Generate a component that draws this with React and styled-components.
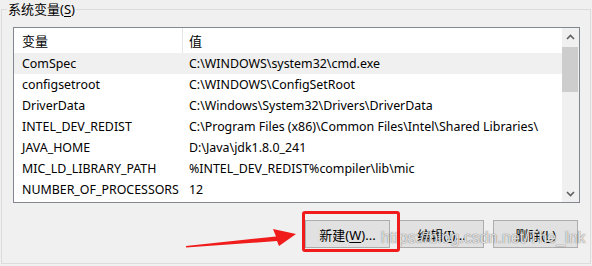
import React from "react";
import styled, { createGlobalStyle } from "styled-components";

const GlobalStyle = createGlobalStyle`
  html, body { margin: 0; padding: 0; background: #f0f0f0; }
  body {
    width: 592px; height: 266px; overflow: hidden;
    font-family: "Noto Sans", "Noto Sans CJK SC", sans-serif;
    font-size: 13px; color: #000;
  }
  * { box-sizing: border-box; }
`;

const Page = styled.div`
  position: relative;
  width: 592px;
  height: 266px;
  padding: 0 1px 0 1px;
`;

const Group = styled.fieldset`
  margin: 0;
  border: 1px solid #dcdcdc;
  padding: 9px 10px 15px 11px;
  min-width: 0;
`;

const Legend = styled.legend`
  margin-left: -6px;
  padding: 0 1px;
  line-height: 18px;
  height: 18px;
  font-size: 13px;
`;

const U = styled.span`
  text-decoration: underline;
  text-underline-offset: 2px;
`;

const ListBox = styled.div`
  display: flex;
  height: 176px;
  border: 1px solid #828790;
  background: #fff;
  font-size: 12.4px;
`;

const ListBody = styled.div`
  flex: 1;
  display: flex;
  flex-direction: column;
  min-width: 0;
`;

const Header = styled.div`
  display: grid;
  grid-template-columns: 169px 1fr;
  height: 25px;
  font-size: 13px;
`;

const HeadCell = styled.div`
  display: flex;
  align-items: center;
  padding-left: ${(p) => (p.$first ? "8px" : "6px")};
  border-right: ${(p) => (p.$first ? "1px solid #e5e5e5" : "none")};
`;

const Row = styled.div`
  display: grid;
  grid-template-columns: 169px 1fr;
  height: 21px;
  align-items: center;
  background: ${(p) => (p.$selected ? "#f0f0f0" : "transparent")};
`;

const Cell = styled.div`
  padding-left: ${(p) => (p.$first ? "8px" : "6px")};
  white-space: nowrap;
  overflow: hidden;
`;

const ScrollBar = styled.div`
  width: 17px;
  display: flex;
  flex-direction: column;
  background: #f0f0f0;
`;

const ScrollArrow = styled.div`
  height: 17px;
  display: flex;
  align-items: center;
  justify-content: center;
`;

const Track = styled.div`
  flex: 1;
  display: flex;
  flex-direction: column;
`;

const Thumb = styled.div`
  margin: 2px 1px 0 0;
  height: 45px;
  background: #cdcdcd;
`;

const Buttons = styled.div`
  display: flex;
  justify-content: flex-end;
  gap: 9px;
  margin-top: 17px;
  padding-right: 2px;
`;

const Button = styled.button`
  width: 85px;
  height: 28px;
  background: #e1e1e1;
  border: 1px solid #adadad;
  font-family: inherit;
  font-size: 13px;
  color: #000;
  padding: 0;
`;

const Annotation = styled.svg`
  position: absolute;
  inset: 0;
  pointer-events: none;
`;

const Highlight = styled.div`
  position: absolute;
  left: 302px;
  top: 211px;
  width: 98px;
  height: 41px;
  border: 3px solid #f01b1b;
  border-radius: 3px;
  pointer-events: none;
`;

const Watermark = styled.div`
  position: absolute;
  left: 381px;
  top: 229px;
  font-family: "Liberation Sans", Arial, sans-serif;
  font-size: 16px;
  color: rgba(255, 255, 255, 0.8);
  text-shadow: 0 0 1px rgba(90, 90, 90, 0.8), 0 0 1px rgba(90, 90, 90, 0.5);
  pointer-events: none;
  white-space: nowrap;
`;

const rows = [
  ["ComSpec", "C:\\WINDOWS\\system32\\cmd.exe"],
  ["configsetroot", "C:\\WINDOWS\\ConfigSetRoot"],
  ["DriverData", "C:\\Windows\\System32\\Drivers\\DriverData"],
  ["INTEL_DEV_REDIST", "C:\\Program Files (x86)\\Common Files\\Intel\\Shared Libraries\\"],
  ["JAVA_HOME", "D:\\Java\\jdk1.8.0_241"],
  ["MIC_LD_LIBRARY_PATH", "%INTEL_DEV_REDIST%compiler\\lib\\mic"],
  ["NUMBER_OF_PROCESSORS", "12"],
];

const Chevron = ({ up }) => (
  <svg width="9" height="6" viewBox="0 0 9 6">
    <polyline
      points={up ? "1,5 4.5,1.5 8,5" : "1,1 4.5,4.5 8,1"}
      fill="none"
      stroke="#606060"
      strokeWidth="1.6"
    />
  </svg>
);

export default function App() {
  return (
    <>
      <GlobalStyle />
      <Page>
        <Group>
          <Legend>
            系统变量(<U>S</U>)
          </Legend>
          <ListBox>
            <ListBody>
              <Header>
                <HeadCell $first>变量</HeadCell>
                <HeadCell>值</HeadCell>
              </Header>
              {rows.map(([k, v], i) => (
                <Row key={k} $selected={i === 0}>
                  <Cell $first>{k}</Cell>
                  <Cell>{v}</Cell>
                </Row>
              ))}
            </ListBody>
            <ScrollBar>
              <ScrollArrow>
                <Chevron up />
              </ScrollArrow>
              <Track>
                <Thumb />
              </Track>
              <ScrollArrow>
                <Chevron />
              </ScrollArrow>
            </ScrollBar>
          </ListBox>
          <Buttons>
            <Button>
              新建(<U>W</U>)...
            </Button>
            <Button>
              编辑(<U>I</U>)...
            </Button>
            <Button>
              删除(<U>L</U>)
            </Button>
          </Buttons>
        </Group>
        <Watermark>https://blog.csdn.net/The_lnk</Watermark>
        <Highlight />
        <Annotation width="592" height="266" viewBox="0 0 592 266">
          <polygon
            points="186,246 276,236.5 273,229 296,234 279,246 277,241 186,247.5"
            fill="#f01b1b"
          />
        </Annotation>
      </Page>
    </>
  );
}
